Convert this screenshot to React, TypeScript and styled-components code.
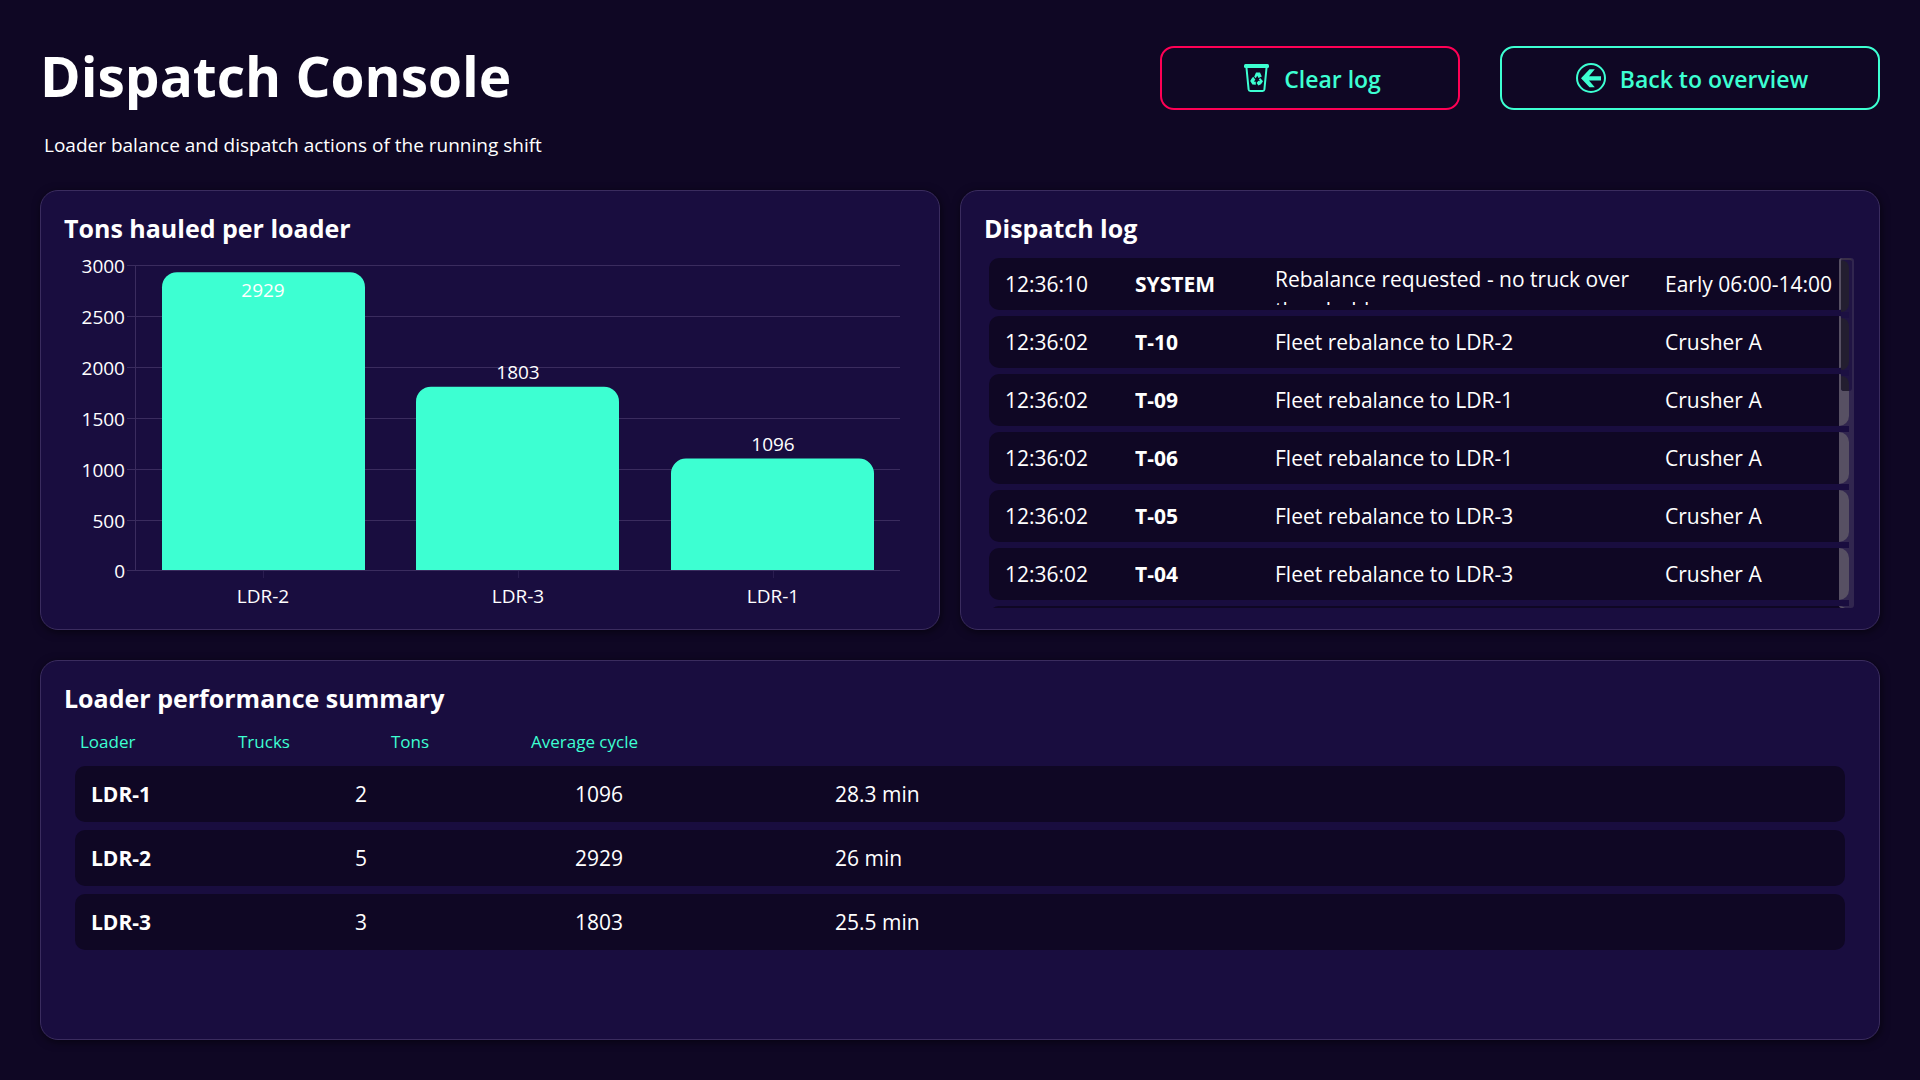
import React from "react";
import styled, { createGlobalStyle } from "styled-components";

const color = {
  page: "#0f0724",
  panel: "#190d3f",
  line: "#3a2c5e",
  teal: "#3dffd2",
  red: "#ff0055",
  text: "#ffffff",
};

const GlobalStyle = createGlobalStyle`
  * { box-sizing: border-box; }
  body {
    margin: 0;
    background: ${color.page};
    color: ${color.text};
    font-family: "Open Sans", "Noto Sans", sans-serif;
  }
`;

const Page = styled.div`
  min-height: 100vh;
  padding: 40px;
  display: flex;
  flex-direction: column;
`;

const Header = styled.header`
  display: flex;
  justify-content: space-between;
  align-items: flex-start;
  height: 150px;
`;

const Heading = styled.div`
  display: flex;
  flex-direction: column;
`;

const Title = styled.h1`
  margin: 0;
  font-size: 55px;
  line-height: 72px;
  font-weight: 700;
`;

const Subtitle = styled.p`
  margin: 20px 0 0 4px;
  font-size: 19px;
  line-height: 26px;
`;

const Actions = styled.div`
  display: flex;
  gap: 40px;
  padding-top: 6px;
`;

const ActionButton = styled.button<{ $border: string; $width: number }>`
  display: flex;
  align-items: center;
  justify-content: center;
  gap: 14px;
  width: ${(p) => p.$width}px;
  height: 64px;
  padding: 0 0 0 4px;
  border: 2px solid ${(p) => p.$border};
  border-radius: 14px;
  background: transparent;
  color: ${color.teal};
  font-family: inherit;
  font-size: 23px;
  font-weight: 600;
  cursor: pointer;
`;

const ButtonLabel = styled.span`
  padding-top: 2px;
`;

const Panels = styled.main`
  flex: 1;
  display: grid;
  grid-template-columns: 900fr 920fr;
  grid-template-rows: 440px minmax(380px, 1fr);
  gap: 30px 20px;
`;

const Panel = styled.section<{ $wide?: boolean }>`
  grid-column: ${(p) => (p.$wide ? "1 / -1" : "auto")};
  min-width: 0;
  padding: 20px 23px;
  border: 1px solid ${color.line};
  border-radius: 18px;
  background: ${color.panel};
  box-shadow: 1px 2px 8px rgba(0, 0, 0, 0.55);
`;

const PanelTitle = styled.h2`
  margin: 0 0 2px;
  font-size: 25px;
  line-height: 34px;
  font-weight: 700;
`;

const Chart = styled.svg`
  display: block;
  width: 100%;
  height: auto;
  text {
    fill: ${color.text};
    font-size: 19px;
  }
`;

const LogArea = styled.div`
  position: relative;
  height: 350px;
  margin: 13px 2px 0 5px;
  overflow: hidden;
`;

const LogTable = styled.table`
  display: block;
  margin-right: 5px;
`;

const LogBody = styled.tbody`
  display: flex;
  flex-direction: column;
  gap: 6px;
`;

const LogRow = styled.tr`
  display: grid;
  grid-template-columns: 130px 140px 390px 1fr;
  align-items: center;
  height: 52px;
  padding: 6px 0 5px 16px;
  border-radius: 10px;
  background: ${color.page};
`;

const LogCell = styled.td`
  max-height: 41px;
  padding: 0 20px 0 0;
  overflow: hidden;
  font-size: 21px;
  line-height: 31px;
  &:last-child {
    padding: 0;
    white-space: nowrap;
  }
`;

const LogUnit = styled(LogCell).attrs({ as: "th", scope: "row" })`
  text-align: left;
  font-weight: 700;
`;

const Track = styled.div`
  position: absolute;
  top: 0;
  right: 0;
  width: 15px;
  height: 350px;
  border-radius: 3px;
  overflow: hidden;
  background: #31264f;
`;

const Segments = styled.div<{ $fill: string; $width: number; $gap: string }>`
  display: flex;
  flex-direction: column;
  width: ${(p) => p.$width}px;
  span {
    flex: none;
    height: 52px;
    border-radius: 0 10px 10px 0;
    background: ${(p) => p.$fill};
  }
  i {
    flex: none;
    height: 6px;
    background: ${(p) => p.$gap};
  }
`;

const Thumb = styled.div`
  position: absolute;
  top: 0;
  left: 2px;
  width: 11px;
  height: 133px;
  border-top: 2px solid #3a3048;
  border-radius: 3px;
  overflow: hidden;
  background: #201444;
`;

const SummaryTable = styled.table`
  display: block;
  margin: 14px 11px 0 11px;
`;

const SummaryHead = styled.thead`
  display: block;
`;

const SummaryHeadRow = styled.tr`
  display: grid;
  grid-template-columns: 158px 153px 140px 1fr;
  padding-left: 5px;
`;

const SummaryHeadCell = styled.th`
  padding: 0;
  text-align: left;
  color: ${color.teal};
  font-size: 17px;
  line-height: 26px;
  font-weight: 400;
`;

const SummaryBody = styled.tbody`
  display: flex;
  flex-direction: column;
  gap: 8px;
  margin-top: 11px;
`;

const SummaryRow = styled.tr`
  display: grid;
  grid-template-columns: 264px 220px 260px 1fr;
  align-items: center;
  height: 56px;
  padding-left: 16px;
  border-radius: 10px;
  background: ${color.page};
`;

const SummaryCell = styled.td`
  padding: 0;
  font-size: 21px;
  line-height: 31px;
`;

const SummaryName = styled(SummaryCell).attrs({ as: "th", scope: "row" })`
  text-align: left;
  font-weight: 700;
`;

const BinIcon = () => (
  <svg width="27" height="30" viewBox="0 0 27 30" fill="none" aria-hidden="true">
    <rect x="1" y="1" width="25" height="4" rx="1.5" fill="currentColor" />
    <path d="M3.5 5 5.6 26.4Q5.8 28 7.4 28H19.6Q21.2 28 21.4 26.4L23.5 5" stroke="currentColor" strokeWidth="2" />
    <path d="M11.2 13.8 13 9.6 17 9.6 18.8 13.4 15.6 15 14.2 12.8 12.8 15.2Z" fill="currentColor" />
    <path d="M10.2 13.8 12.4 16.8 10.8 18.6 12.8 18.8 12.8 21.8 9.4 21.4 7.2 18 8.8 15.2Z" fill="currentColor" />
    <path d="M17.2 15 20 18.2 18 21.2 15.4 22.4 13.6 20 15.4 17.8 17 18.2 15.8 16.2Z" fill="currentColor" />
  </svg>
);

const BackIcon = () => (
  <svg width="30" height="30" viewBox="0 0 30 30" fill="none" aria-hidden="true">
    <circle cx="15" cy="15" r="14" stroke="currentColor" strokeWidth="2" />
    <path d="M5 15.3 13.5 6.3H18.8L13 13.2H25V17.4H13L18.8 24.2H13.5Z" fill="currentColor" />
  </svg>
);

const loaderTons = [
  { name: "LDR-2", tons: 2929 },
  { name: "LDR-3", tons: 1803 },
  { name: "LDR-1", tons: 1096 },
];

const log = [
  ["12:36:10", "SYSTEM", "Rebalance requested - no truck over threshold", "Early 06:00-14:00"],
  ["12:36:02", "T-10", "Fleet rebalance to LDR-2", "Crusher A"],
  ["12:36:02", "T-09", "Fleet rebalance to LDR-1", "Crusher A"],
  ["12:36:02", "T-06", "Fleet rebalance to LDR-1", "Crusher A"],
  ["12:36:02", "T-05", "Fleet rebalance to LDR-3", "Crusher A"],
  ["12:36:02", "T-04", "Fleet rebalance to LDR-3", "Crusher A"],
  ["", "", "", ""],
];

const summary = [
  ["LDR-1", "2", "1096", "28.3 min"],
  ["LDR-2", "5", "2929", "26 min"],
  ["LDR-3", "3", "1803", "25.5 min"],
];

const TonsChart = () => {
  const left = 71;
  const right = 836;
  const top = 18;
  const bottom = 323;
  const band = (right - left) / loaderTons.length;
  const barWidth = 203;
  const radius = 15;
  const yOf = (v: number) => bottom - (v / 3000) * (bottom - top);
  const ticks = [0, 500, 1000, 1500, 2000, 2500, 3000];
  return (
    <Chart viewBox="0 0 852 362" role="img" aria-label="Tons hauled per loader">
      {ticks.map((t) => (
        <g key={t}>
          <path d={`M${left - 8} ${Math.ceil(yOf(t)) + 0.5}H${right}`} stroke={color.line} />
          <text x={left - 10} y={Math.ceil(yOf(t)) + 8} textAnchor="end">
            {t}
          </text>
        </g>
      ))}
      <path d={`M${left + 0.5} ${top}V${bottom}`} stroke={color.line} />
      {loaderTons.map((d, i) => {
        const mid = Math.round(left + band * (i + 0.5));
        const x = Math.floor(left + band * (i + 0.5) - barWidth / 2) + (i === 0 ? 1 : 0);
        const y = yOf(d.tons);
        const inside = y - top < 20;
        return (
          <g key={d.name}>
            <path
              d={`M${x} ${bottom}V${y + radius}A${radius} ${radius} 0 0 1 ${x + radius} ${y}H${x + barWidth - radius}A${radius} ${radius} 0 0 1 ${x + barWidth} ${y + radius}V${bottom}Z`}
              fill={color.teal}
            />
            <path d={`M${mid + 0.5} ${bottom + 1}V${bottom + 8}`} stroke="#2a1d50" />
            <text x={mid} y={inside ? Math.round(y) + 25 : Math.round(y) - 8} textAnchor="middle">
              {d.tons}
            </text>
            <text x={mid} y={bottom + 33} textAnchor="middle">
              {d.name}
            </text>
          </g>
        );
      })}
    </Chart>
  );
};

const RowSegments = (props: { fill: string; width: number; gap: string }) => (
  <Segments $fill={props.fill} $width={props.width} $gap={props.gap}>
    {log.map((_, i) => (
      <React.Fragment key={i}>
        <span />
        <i />
      </React.Fragment>
    ))}
  </Segments>
);

export default function App() {
  return (
    <Page>
      <GlobalStyle />
      <Header>
        <Heading>
          <Title>Dispatch Console</Title>
          <Subtitle>Loader balance and dispatch actions of the running shift</Subtitle>
        </Heading>
        <Actions>
          <ActionButton type="button" $border={color.red} $width={300}>
            <BinIcon />
            <ButtonLabel>Clear log</ButtonLabel>
          </ActionButton>
          <ActionButton type="button" $border={color.teal} $width={380}>
            <BackIcon />
            <ButtonLabel>Back to overview</ButtonLabel>
          </ActionButton>
        </Actions>
      </Header>
      <Panels>
        <Panel>
          <PanelTitle>Tons hauled per loader</PanelTitle>
          <TonsChart />
        </Panel>
        <Panel>
          <PanelTitle>Dispatch log</PanelTitle>
          <LogArea>
            <LogTable>
              <LogBody>
                {log.map(([time, unit, action, place], i) => (
                  <LogRow key={i}>
                    <LogCell>{time}</LogCell>
                    <LogUnit>{unit}</LogUnit>
                    <LogCell>{action}</LogCell>
                    <LogCell>{place}</LogCell>
                  </LogRow>
                ))}
              </LogBody>
            </LogTable>
            <Track>
              <RowSegments fill="#575063" width={10} gap={color.panel} />
              <Thumb>
                <RowSegments fill="#231e30" width={8} gap="#1c1042" />
              </Thumb>
            </Track>
          </LogArea>
        </Panel>
        <Panel $wide>
          <PanelTitle>Loader performance summary</PanelTitle>
          <SummaryTable>
            <SummaryHead>
              <SummaryHeadRow>
                <SummaryHeadCell scope="col">Loader</SummaryHeadCell>
                <SummaryHeadCell scope="col">Trucks</SummaryHeadCell>
                <SummaryHeadCell scope="col">Tons</SummaryHeadCell>
                <SummaryHeadCell scope="col">Average cycle</SummaryHeadCell>
              </SummaryHeadRow>
            </SummaryHead>
            <SummaryBody>
              {summary.map(([name, trucks, tons, cycle]) => (
                <SummaryRow key={name}>
                  <SummaryName>{name}</SummaryName>
                  <SummaryCell>{trucks}</SummaryCell>
                  <SummaryCell>{tons}</SummaryCell>
                  <SummaryCell>{cycle}</SummaryCell>
                </SummaryRow>
              ))}
            </SummaryBody>
          </SummaryTable>
        </Panel>
      </Panels>
    </Page>
  );
}
